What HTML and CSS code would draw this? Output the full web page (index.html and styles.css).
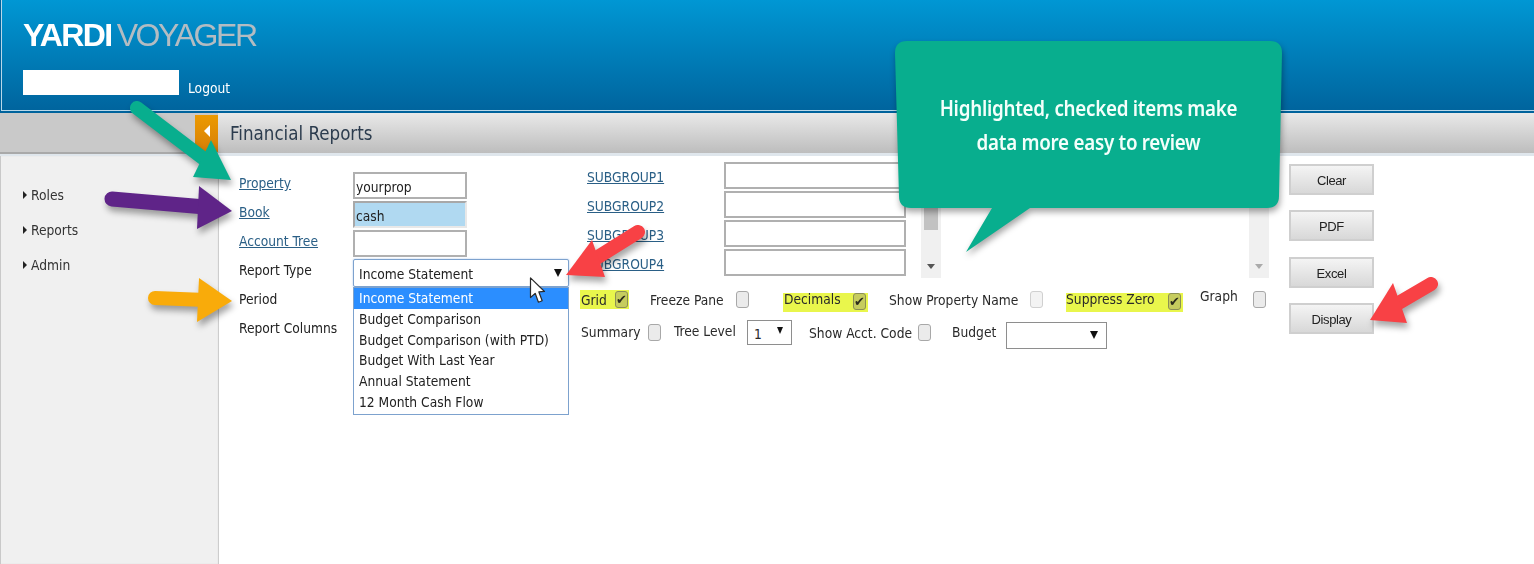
FILE: index.html
```html
<!DOCTYPE html>
<html lang="en">
<head>
<meta charset="utf-8">
<title>Financial Reports</title>
<link rel="stylesheet" href="styles.css">
</head>
<body>
<div class="page">
  <header class="header">
    <div class="logo"><span class="logo-a">YARDI</span><span class="logo-b">VOYAGER</span></div>
    <div class="user"><div class="user-box"></div><a class="logout">Logout</a></div>
  </header>
  <div class="titlebar">
    <div class="title-side"><div class="toggle"><span class="toggle-tri"></span></div></div>
    <h1 class="title">Financial Reports</h1>
  </div>
  <div class="content">
    <nav class="sidebar">
      <div class="nav-item">Roles</div>
      <div class="nav-item">Reports</div>
      <div class="nav-item">Admin</div>
    </nav>
    <main class="main">
      <section class="left">
        <div class="row"><a class="lab link">Property</a><div class="field">yourprop</div></div>
        <div class="row"><a class="lab link">Book</a><div class="field field-sel"><span>cash</span></div></div>
        <div class="row"><a class="lab link">Account Tree</a><div class="field"></div></div>
        <div class="row"><span class="lab">Report Type</span>
          <div class="rt">
            <div class="rt-select">Income Statement<span class="tri"></span></div>
            <ul class="rt-list">
              <li class="on">Income Statement</li>
              <li>Budget Comparison</li>
              <li>Budget Comparison (with PTD)</li>
              <li>Budget With Last Year</li>
              <li>Annual Statement</li>
              <li>12 Month Cash Flow</li>
            </ul>
          </div>
        </div>
        <div class="row"><span class="lab">Period</span></div>
        <div class="row"><span class="lab">Report Columns</span></div>
      </section>
      <section class="center">
        <div class="upper">
          <div class="subs">
            <div class="sub"><a class="sub-lab link">SUBGROUP1</a><div class="sub-field"></div></div>
            <div class="sub"><a class="sub-lab link">SUBGROUP2</a><div class="sub-field"></div></div>
            <div class="sub"><a class="sub-lab link">SUBGROUP3</a><div class="sub-field"></div></div>
            <div class="sub"><a class="sub-lab link">SUBGROUP4</a><div class="sub-field"></div></div>
          </div>
          <div class="pane">
            <div class="sbar"><div class="thumb"></div><span class="sbar-tri"></span></div>
            <div class="sbar"><span class="sbar-tri sbar-tri-off"></span></div>
          </div>
        </div>
        <div class="opts opts-1">
          <label class="opt w-grid hi">Grid<input type="checkbox" checked class="cb"></label>
          <label class="opt w-freeze">Freeze Pane<input type="checkbox" class="cb"></label>
          <label class="opt w-dec hi hi-low">Decimals<input type="checkbox" checked class="cb"></label>
          <label class="opt w-spn">Show Property Name<input type="checkbox" class="cb cb-faint"></label>
          <label class="opt w-sz hi hi-low">Suppress Zero<input type="checkbox" checked class="cb"></label>
          <label class="opt w-graph">Graph<input type="checkbox" class="cb"></label>
        </div>
        <div class="opts opts-2">
          <label class="opt w-sum">Summary<input type="checkbox" class="cb"></label>
          <div class="opt w-tree">Tree Level<div class="mini-select mini-tree">1<span class="tri"></span></div></div>
          <label class="opt w-acct">Show Acct. Code<input type="checkbox" class="cb"></label>
          <div class="opt w-budget">Budget<div class="mini-select mini-budget"><span class="tri"></span></div></div>
        </div>
      </section>
      <aside class="actions">
        <button class="btn">Clear</button>
        <button class="btn">PDF</button>
        <button class="btn">Excel</button>
        <button class="btn">Display</button>
      </aside>
    </main>
  </div>

  <svg class="pointer" viewBox="0 0 18 30" aria-hidden="true">
    <path d="M1.5 1 L1.5 22 L6.5 17.5 L10 27 L14 25.5 L10.5 16 L16.5 15.5 Z" fill="#fff" stroke="#2b2b2b" stroke-width="1.3" stroke-linejoin="round"/>
  </svg>

  <svg class="arrows" viewBox="0 0 1534 564" aria-hidden="true">
    <g class="arrow-green">
      <path d="M137 108 L208 162" stroke="#08ae8e" stroke-width="14" stroke-linecap="round" fill="none"/>
      <path d="M231 180 L193 177 L211 140 Z" fill="#08ae8e"/>
    </g>
    <g class="arrow-purple">
      <path d="M112 199 L205 207" stroke="#5f2488" stroke-width="15" stroke-linecap="round" fill="none"/>
      <path d="M232 211 L197 229 L199 186 Z" fill="#5f2488"/>
    </g>
    <g class="arrow-orange">
      <path d="M155 298 L205 300" stroke="#f9ab0a" stroke-width="14" stroke-linecap="round" fill="none"/>
      <path d="M232 301 L197 322 L199 278 Z" fill="#f9ab0a"/>
    </g>
    <g class="arrow-red">
      <path d="M638 232 L590 262" stroke="#f84145" stroke-width="14" stroke-linecap="round" fill="none"/>
      <path d="M566 275 L592 240 L605 277 Z" fill="#f84145"/>
    </g>
    <g class="arrow-red">
      <path d="M1431 284 L1390 308" stroke="#f84145" stroke-width="14" stroke-linecap="round" fill="none"/>
      <path d="M1370 320 L1393 283 L1407 323 Z" fill="#f84145"/>
    </g>
  </svg>

  <div class="callout">
    <svg class="callout-shape" viewBox="0 0 387 211" aria-hidden="true">
      <path d="M12 0 H375 Q387 0 387 12 L384 155 Q384 167 372 167 H135 L71 211 L97 167 H16 Q4 167 4 155 L0 12 Q0 0 12 0 Z" fill="#08ae8e"/>
    </svg>
    <p class="callout-text">Highlighted, checked items make<br>data more easy to review</p>
  </div>
</div>
</body>
</html>
```
FILE: styles.css
```css
* { box-sizing: border-box; }
html, body { margin: 0; padding: 0; background: #fff; }
body { font-family: "DejaVu Sans", "Noto Sans", sans-serif; font-stretch: condensed; font-size: 13.7px; color: #222; }
.page { position: relative; width: 1534px; height: 564px; overflow: hidden; filter: blur(0.45px); }

.header { height: 113px; padding: 19px 0 0 23px; background: linear-gradient(#0097d4, #00639c); box-shadow: inset 1px -2px 0 #00639c, inset 2px -3px 0 #b9d8e9; }
.logo { font-family: "Liberation Sans", sans-serif; font-stretch: normal; font-size: 32px; line-height: 32px; height: 32px; white-space: nowrap; }
.logo-a { color: #fff; font-weight: 700; letter-spacing: -1.6px; }
.logo-b { color: #b3bcc2; margin-left: 5px; letter-spacing: -2.4px; }
.user { display: flex; align-items: flex-end; margin-top: 19px; }
.user-box { width: 156px; height: 25px; background: #fff; }
.logout { color: #fff; margin-left: 9px; line-height: 20px; margin-bottom: -3px; }

.titlebar { height: 43px; display: flex; background: linear-gradient(#e9e9e9, #bdbdbd); border-bottom: 3px solid #dfe6ec; }
.title-side { width: 218px; background: #c9c9c9; display: flex; justify-content: flex-end; margin-bottom: -1px; border-bottom: 2px solid #a9a9a9; }
.toggle { width: 23px; margin: 2px 0 0; background: linear-gradient(#ec9a00, #d77f08); display: flex; align-items: center; justify-content: center; padding-bottom: 6px; }
.toggle-tri { width: 0; height: 0; border-style: solid; border-width: 6px 6px 6px 0; border-color: transparent #fff transparent transparent; }
.title { margin: 0 0 0 12px; font-size: 18.6px; font-weight: 400; line-height: 41px; color: #2c3c4e; }

.content { display: flex; height: 408px; }
.sidebar { width: 219px; background: #f0f0f0; border-left: 1px solid #c9c9c9; box-shadow: inset -1px 0 1px #c9c9c9; padding: 22px 0 0 21px; }
.nav-item { position: relative; height: 35px; line-height: 35px; padding-left: 9px; color: #333; }
.nav-item::before { content: ""; position: absolute; left: 1px; top: 13px; border-style: solid; border-width: 4px 0 4px 4px; border-color: transparent transparent transparent #222; }

.main { flex: 1; display: flex; padding-left: 20px; background: #fff; }
.left { width: 341px; padding-top: 16px; }
.row { display: flex; height: 29px; align-items: flex-start; }
.lab { width: 114px; line-height: 22px; white-space: nowrap; }
.link { color: #2a5f86; text-decoration: underline; }
.field { width: 114px; height: 27px; border: 2px solid #b0b0b0; padding-left: 1px; line-height: 27px; background: #fff; }
.field-sel { border: 2px solid #a8a8a8; border-right-color: #e8e8e8; border-bottom-color: #e8e8e8; background: #b0d9f1; }

.rt { position: relative; width: 216px; }
.rt-select { height: 28px; line-height: 29px; padding-left: 5px; border: 1px solid #7da2ce; border-radius: 2px; box-shadow: 0 0 2px #a5c2e8; background: #fff; position: relative; }
.rt-select .tri { right: 6px; top: 9px; }
.rt-list { position: absolute; left: 0; top: 28px; width: 216px; margin: 0; padding: 0 0 1px; list-style: none; border: 1px solid #7da2ce; background: #fff; }
.rt-list li { height: 20.8px; line-height: 20.8px; padding-left: 5px; }
.rt-list li.on { background: #2b8eff; color: #fff; }
.tri { position: absolute; width: 0; height: 0; border-style: solid; border-width: 8px 4px 0; border-color: #111 transparent transparent; }

.center { width: 709px; }
.upper { display: flex; height: 122px; padding-left: 7px; }
.subs { width: 326px; padding-top: 6px; }
.sub { display: flex; height: 29px; }
.sub-lab { width: 137px; line-height: 30px; }
.sub-field { width: 182px; height: 27px; border: 2px solid #b0b0b0; background: #fff; }
.pane { width: 348px; margin-left: 8px; display: flex; justify-content: space-between; }
.sbar { position: relative; width: 20px; background: #f0f0f0; }
.thumb { position: absolute; left: 3px; right: 3px; top: 0; height: 74px; background: #c2c2c2; }
.sbar-tri { position: absolute; left: 6px; bottom: 9px; border-style: solid; border-width: 5px 4px 0; border-color: #555 transparent transparent; }
.sbar-tri-off { border-top-color: #aaa; }

.opts { display: flex; align-items: flex-start; }
.opts-1 { margin-top: 12px; height: 29px; }
.opts-2 { height: 30px; padding-left: 1px; }
.opt { display: flex; justify-content: space-between; align-items: center; white-space: nowrap; height: 19px; color: #2a2a2a; }
.hi { background: #e9f64c; }
.hi-low { margin-top: 3px; align-items: flex-start; line-height: 12px; }
.w-grid { width: 49px; padding: 0 1px; }
.w-freeze { width: 99px; margin-left: 21px; }
.w-dec { width: 85px; margin-left: 34px; padding: 0 2px 0 1px; }
.w-spn { width: 154px; margin-left: 21px; }
.w-sz { width: 117px; margin-left: 23px; padding-right: 2px; }
.w-graph { width: 66px; margin-left: 17px; margin-top: -1px; align-items: flex-start; line-height: 15px; }
.w-graph .cb { margin-top: 2px; }
.w-sum { width: 80px; margin-top: 4px; line-height: 15px; }
.w-tree { width: 118px; margin-left: 13px; height: 25px; margin-top: 1px; align-items: flex-start; line-height: 23px; }
.w-acct { width: 122px; margin-left: 17px; margin-top: 4px; }
.w-budget { width: 155px; margin-left: 21px; height: 27px; margin-top: 3px; align-items: flex-start; line-height: 21px; }

.cb { appearance: none; -webkit-appearance: none; margin: 0; width: 13px; height: 17px; border: 1px solid #a8a8a8; border-radius: 3px; background: #ebebeb; position: relative; flex: none; }
.cb-faint { border-color: #d0d0d0; background: #f3f3f3; }
.cb:checked { background: #c6cc5e; border-color: #8c8f55; }
.cb:checked::before { content: "\2714"; position: absolute; left: -1px; top: 0; width: 13px; text-align: center; font: 13px/15px "DejaVu Sans", sans-serif; color: #2c2c1c; }

.mini-select { position: relative; border: 1px solid #8e8e8e; background: #fff; }
.mini-tree { width: 45px; height: 25px; line-height: 27px; padding-left: 6px; }
.mini-budget { width: 101px; height: 27px; }
.mini-tree .tri { right: 8px; top: 6px; border-width: 7px 3.5px 0; }
.mini-budget .tri { right: 8px; top: 8px; }

.actions { width: 85px; padding-top: 8px; display: flex; flex-direction: column; gap: 15.33px; }
.btn { width: 85px; height: 31px; padding: 2px 0 0; border: 2px solid #cfcfcf; background: linear-gradient(#f4f4f4, #d8d8d8); font: 13px "Liberation Sans", sans-serif; letter-spacing: -0.4px; color: #222; }

.pointer { position: absolute; left: 529px; top: 277px; width: 17px; height: 28px; }
.arrows { position: absolute; inset: 0; width: 1534px; height: 564px; pointer-events: none; }
.arrows g { filter: drop-shadow(2px 5px 3px rgba(0,0,0,.35)); }
.callout { position: absolute; left: 895px; top: 41px; width: 387px; height: 211px; filter: drop-shadow(1px 4px 3px rgba(0,0,0,.35)); }
.callout-shape { position: absolute; inset: 0; width: 387px; height: 211px; }
.callout-text { position: relative; margin: 0; padding-top: 50px; text-align: center; font-family: "Noto Sans", "Open Sans", sans-serif; font-size: 21px; font-weight: 600; line-height: 34px; color: #f4fffb; letter-spacing: -0.3px; transform: scaleX(0.895); }
```
